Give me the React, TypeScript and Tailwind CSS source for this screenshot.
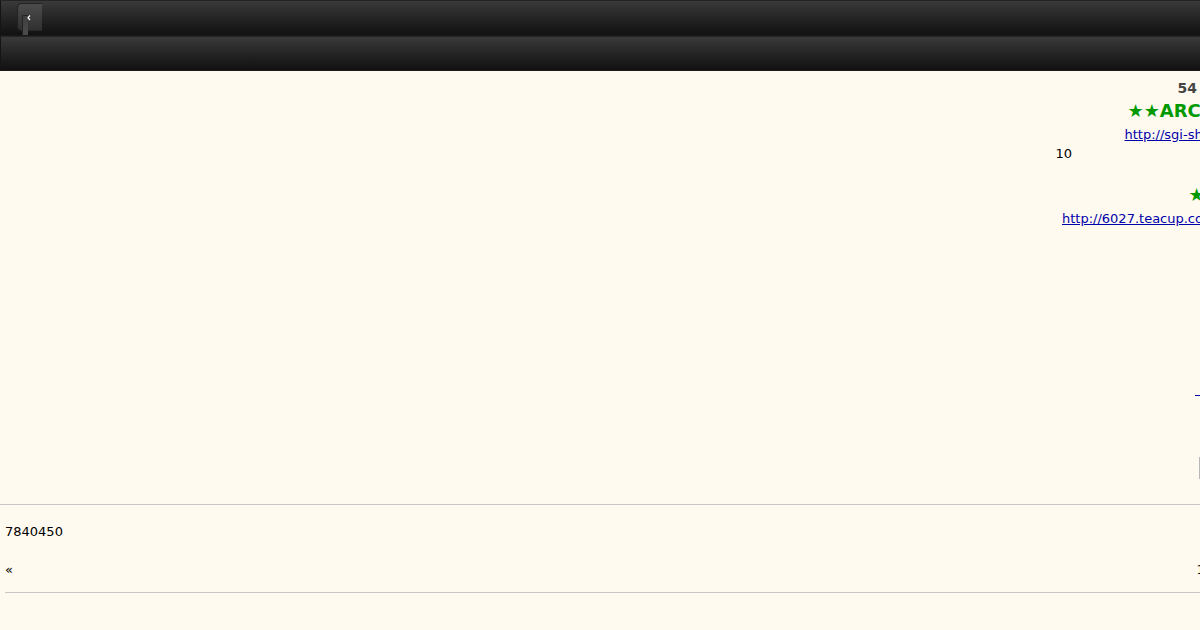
const Toolbar = ({ children }: { children?: React.ReactNode }) => (
  <div className="flex h-[35.5px] items-start border-t border-b border-l border-t-[#242424] border-b-[#1b191b] border-l-[#141414] bg-linear-to-b from-[#3a3a3a] to-[#111111]">
    {children}
  </div>
);

export default function App() {
  return (
    <div className="h-[630px] w-[1200px] overflow-hidden bg-[#fffaf0] font-['DejaVu_Sans',sans-serif] text-[13px] leading-[19px] whitespace-nowrap text-black">
      <header className="h-[71px]">
        <Toolbar>
          <div className="relative mt-[2px] ml-[16px] h-[28px] w-[25px] rounded-l-[5px] border border-r-0 border-[#222222] border-b-[#282828] bg-linear-to-b from-[#4c4c4c] to-[#303030]">
            <span className="absolute top-[11px] left-[4px] h-[20px] w-[6px] rounded-tl-[2px] border-t border-l border-[#222222] bg-linear-to-b from-[#404040] to-[#4b4b4b]" />
            <svg className="absolute top-[11px] left-[9px]" width="4" height="6" viewBox="0 0 4 6" fill="none">
              <path d="M3 .5 1 2.7 3 5" stroke="#ffffff" strokeWidth="1.2" />
            </svg>
          </div>
        </Toolbar>
        <Toolbar />
      </header>

      <main className="h-[434px] overflow-hidden border-b border-[#c8c5c5]">
        <div className="mt-[7px] ml-[1177.5px] h-[21px] text-[14px] leading-[20px] font-bold text-[#444444]">54</div>
        <div className="ml-[1127.5px] h-[24px] text-[18px] leading-[24px] font-bold text-[#009900]">★★ARC</div>
        <a className="ml-[1124.5px] block h-[19px] leading-[24px] text-[#0000aa] underline">http://sgi-sh</a>
        <div className="mt-[2px] ml-[1055.5px] h-[19px]">10</div>
        <div className="mt-[20px] ml-[1188.5px] h-[24px] text-[18px] leading-[24px] font-bold text-[#009900]">★</div>
        <a className="mt-[2px] ml-[1062px] block h-[20px] leading-[20px] text-[#0000aa] underline">http://6027.teacup.co</a>
        <div className="mt-[166px] ml-[1194.5px] h-px bg-[#0000aa]" />
        <div className="mt-[61px] ml-[1199px] h-[22px] bg-[#b8b8b8]" />
      </main>

      <footer className="pl-[5px]">
        <div className="pt-[17px]">7840450</div>
        <div className="mt-[19px] flex h-[33px] border-b border-[#c8c5c5]">
          <span className="w-[1191.5px] shrink-0">«</span>
          <span>1</span>
        </div>
      </footer>
    </div>
  );
}
